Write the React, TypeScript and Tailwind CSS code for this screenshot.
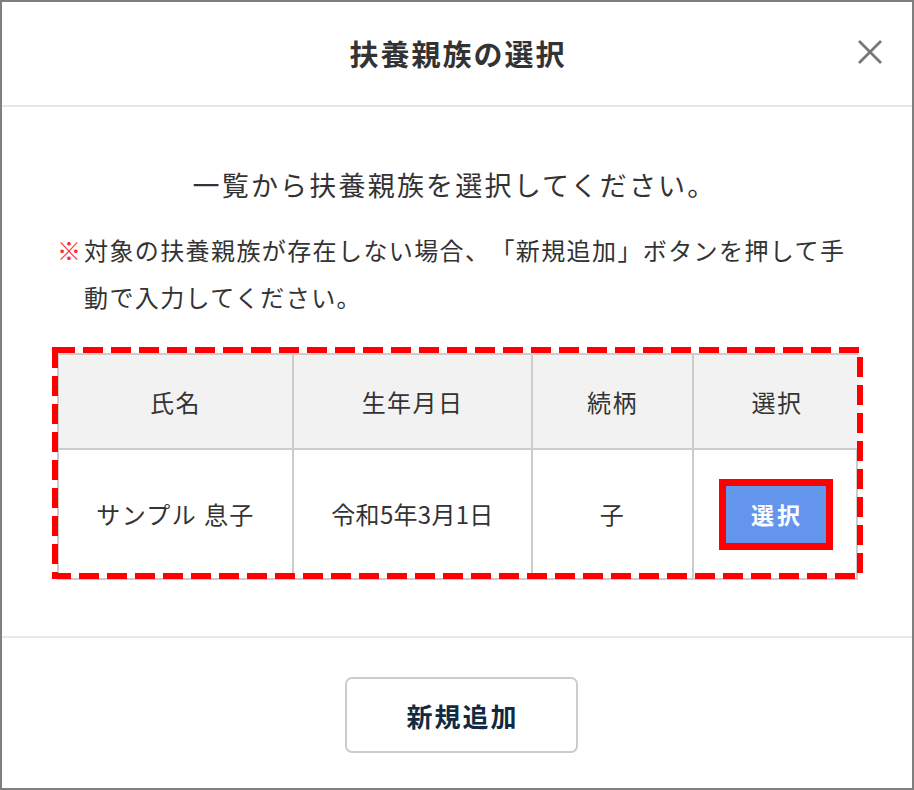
import React from "react";

const font = { fontFamily: '"Noto Sans CJK JP", "Noto Sans", sans-serif' };

export default function App() {
  return (
    <div className="w-[914px] h-[790px] bg-white [text-spacing-trim:space-all]" style={font}>
      <div className="w-[914px] h-[790px] border-2 border-[#7f7f7f] flex flex-col text-[#333333]">
        {/* Header */}
        <div className="relative h-[105px] shrink-0 border-b-2 border-[#e8e8e8] flex items-center justify-center">
          <div className="text-[29px] font-bold tracking-[2px] leading-none text-[#333] pl-[2px]">扶養親族の選択</div>
          <svg className="absolute left-[855px] top-[37px]" width="26" height="26" viewBox="0 0 26 26">
            <line x1="2" y1="2" x2="24" y2="24" stroke="#777" strokeWidth="2.6" />
            <line x1="24" y1="2" x2="2" y2="24" stroke="#777" strokeWidth="2.6" />
          </svg>
        </div>

        {/* Body */}
        <div className="h-[531px] shrink-0 border-b-2 border-[#e8e8e8] pl-[55px] pr-[40px]">
          <div className="mt-[58px] h-[40px] flex items-center justify-center text-[27px] tracking-[2.2px] text-[#333] pr-[20px]">
            一覧から扶養親族を選択してください。
          </div>
          <div className="mt-[21px] flex text-[24px] leading-[47px] tracking-[1.4px] text-[#333]">
            <span className="w-[27px] shrink-0 text-[#ff2a2a] font-bold">※</span>
            <span className="w-[785px]">対象の扶養親族が存在しない場合、「新規追加」ボタンを押して手動で入力してください。</span>
          </div>

          {/* Table */}
          <div className="relative mt-[33px] w-[801px]">
            <div className="grid grid-cols-[235px_239px_161px_166px] border-2 border-[#cccccc] text-[24px] tracking-[1.4px] text-[#333]">
              <div className="h-[95px] bg-[#f2f2f2] border-r-2 border-b-2 border-[#cccccc] flex items-center justify-center">氏名</div>
              <div className="h-[95px] bg-[#f2f2f2] border-r-2 border-b-2 border-[#cccccc] flex items-center justify-center">生年月日</div>
              <div className="h-[95px] bg-[#f2f2f2] border-r-2 border-b-2 border-[#cccccc] flex items-center justify-center">続柄</div>
              <div className="h-[95px] bg-[#f2f2f2] border-b-2 border-[#cccccc] flex items-center justify-center">選択</div>
              <div className="h-[128px] border-r-2 border-[#cccccc] flex items-center justify-center">サンプル 息子</div>
              <div className="h-[128px] border-r-2 border-[#cccccc] flex items-center justify-center tracking-[0.3px]">令和5年3月1日</div>
              <div className="h-[128px] border-r-2 border-[#cccccc] flex items-center justify-center">子</div>
              <div className="h-[128px] flex items-center justify-center">
                <div className="mr-[3px] w-[114px] h-[71px] border-[7px] border-[#ff0000] bg-[#6495ed] flex items-center justify-center text-white font-bold text-[23px] tracking-[3px] pl-[3px]">
                  選択
                </div>
              </div>
            </div>
            <svg className="absolute left-[-5px] top-[-6px] pointer-events-none" width="811" height="232" viewBox="0 0 811 232">
              <rect x="3" y="3" width="805" height="226" fill="none" stroke="#ff0000" strokeWidth="6" strokeDasharray="20 8" />
            </svg>
          </div>
        </div>

        {/* Footer */}
        <div className="flex-1 flex items-start justify-center pt-[39px]">
          <div className="ml-[9px] w-[233px] h-[76px] border-2 border-[#cccccc] rounded-[7px] flex items-center justify-center text-[26px] font-bold tracking-[2px] text-[#102a43] pl-[2px]">
            新規追加
          </div>
        </div>
      </div>
    </div>
  );
}
